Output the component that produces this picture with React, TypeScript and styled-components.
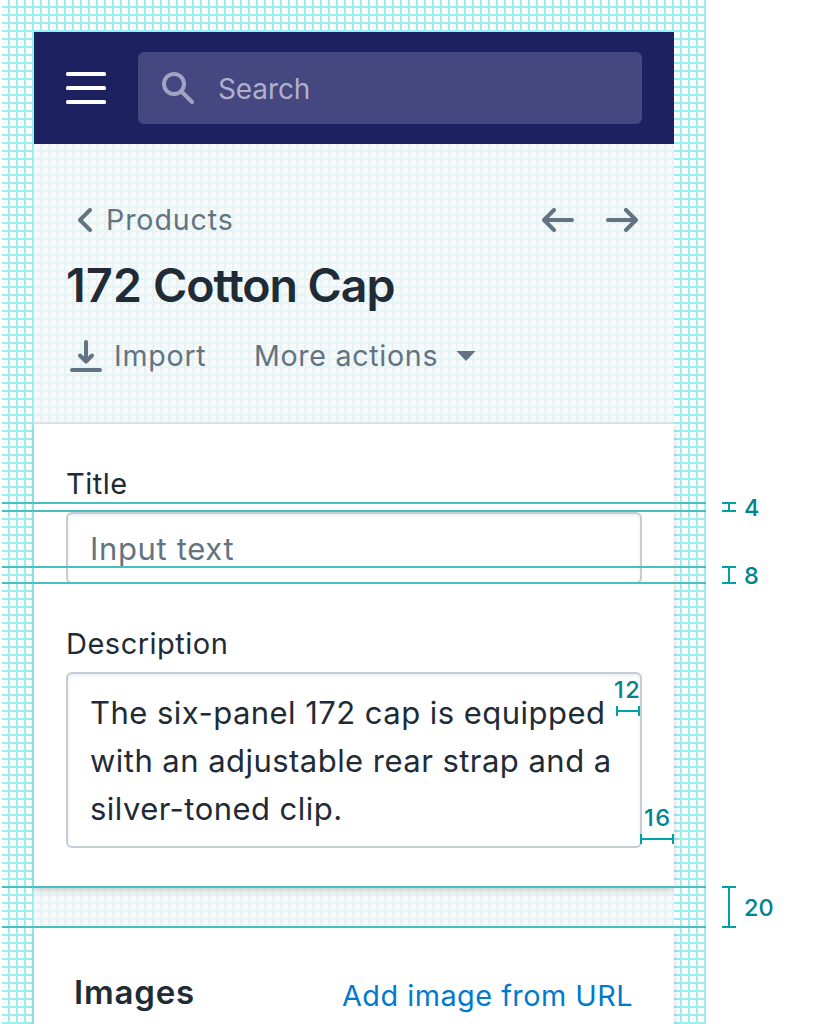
import React from "react";
import styled, { createGlobalStyle } from "styled-components";

const GlobalStyle = createGlobalStyle`
  *, *::before, *::after { box-sizing: border-box; }
  html, body { margin: 0; padding: 0; background: #fff; overflow: hidden; }
  body { font-family: Inter, "Liberation Sans", sans-serif; color: #212b36; }
  svg { display: block; flex: none; }
`;

const Board = styled.main`
  position: relative;
  width: 816px;
  height: 1024px;
  padding-left: 2px;
  overflow: hidden;
  background: #fff;
`;

const GridArea = styled.div`
  width: 704px;
  height: 1024px;
  padding: 32px 32px 0;
  background-image:
    linear-gradient(to right, transparent 6px, #9ceeed 6px),
    linear-gradient(to bottom, transparent 6px, #9ceeed 6px);
  background-size: 8px 8px;
`;

const Screen = styled.div`
  height: 992px;
  display: flex;
  flex-direction: column;
  background: rgba(244, 246, 248, 0.83);
`;

const TopBar = styled.header`
  display: flex;
  align-items: center;
  gap: 32px;
  flex: none;
  height: 112px;
  padding: 0 32px;
  background: #1c2260;
`;

const SearchField = styled.div`
  display: flex;
  align-items: center;
  gap: 24px;
  flex: 1;
  height: 72px;
  padding-left: 24px;
  border-radius: 6px;
  background: #454780;
  color: #b0b0cd;
`;

interface TextProps {
  $size: number;
  $spacing?: number;
  $weight?: number;
  $line?: number;
}

const Text = styled.span<TextProps>`
  display: block;
  white-space: nowrap;
  font-size: ${(p) => p.$size}px;
  font-weight: ${(p) => p.$weight ?? 400};
  letter-spacing: ${(p) => p.$spacing ?? 0}px;
  line-height: ${(p) => p.$line ?? 40}px;
`;

const SearchText = styled(Text)`
  padding-top: 1px;
`;

const PageHeader = styled.section`
  flex: none;
  height: 280px;
  padding: 56px 32px 0;
  border-bottom: 2px solid #d9e3e7;
  color: #637381;
`;

const HeaderRow = styled.div`
  display: flex;
  align-items: center;
  justify-content: space-between;
  height: 40px;
`;

const Breadcrumb = styled.div`
  display: flex;
  align-items: center;
  gap: 14px;
  padding-left: 12px;
`;

const Pager = styled.div`
  display: flex;
  gap: 32px;
  padding-right: 4px;
`;

const PageTitle = styled(Text).attrs({ as: "h1" })`
  margin: 16px 0 22px;
  color: #212b36;
`;

const TitleNumber = styled.span`
  letter-spacing: 0.3px;
`;

const Actions = styled.div`
  display: flex;
  align-items: center;
  height: 40px;
  padding-left: 4px;
`;

const ImportAction = styled.div`
  display: flex;
  align-items: center;
  gap: 12px;
  width: 184px;
`;

const MoreAction = styled.div`
  display: flex;
  align-items: center;
  justify-content: space-between;
  width: 222px;
`;

const Card = styled.section`
  flex: none;
  background: #fff;
  box-shadow: 0 2px 6px rgba(33, 43, 54, 0.22);
  clip-path: inset(0 -6px -8px -6px);
`;

const FormCard = styled(Card)`
  display: flex;
  flex-direction: column;
  gap: 40px;
  height: 464px;
  padding: 40px 32px 0;
`;

const ImagesCard = styled(Card)`
  display: flex;
  justify-content: space-between;
  height: 120px;
  margin-top: 40px;
  padding: 44px 41px 0 40px;
`;

const Field = styled.div`
  display: flex;
  flex-direction: column;
  gap: 8px;
`;

const Control = styled.div<{ $height: number; $top: number }>`
  height: ${(p) => p.$height}px;
  padding: ${(p) => p.$top}px 22px 0;
  border: 2px solid #c4cdd5;
  border-radius: 6px;
  background: #fff;
  box-shadow: inset 0 2px 3px rgba(99, 115, 129, 0.12);
`;

const Placeholder = styled(Text)`
  color: #637381;
`;

const LinkText = styled(Text)`
  color: #007ace;
`;

const Guide = styled.i<{ $y: number }>`
  position: absolute;
  left: 2px;
  top: ${(p) => p.$y}px;
  width: 704px;
  height: 2px;
  background: #47c1bf;
`;

const Span = styled.div<{ $x: number; $y: number; $w: number; $h: number; $axis: "x" | "y" }>`
  position: absolute;
  left: ${(p) => p.$x}px;
  top: ${(p) => p.$y}px;
  width: ${(p) => p.$w}px;
  height: ${(p) => p.$h}px;
  border: 0 solid #00a3a3;
  border-width: ${(p) => (p.$axis === "y" ? "2px 0" : "0 2px")};

  &::after {
    content: "";
    position: absolute;
    background: #00a3a3;
    ${(p) => (p.$axis === "y" ? "left: 6px; width: 2px; top: 0; bottom: 0;" : "top: 4px; height: 2px; left: 0; right: 0;")}
  }
`;

const Measure = styled(Text)<{ $x: number; $y: number }>`
  position: absolute;
  left: ${(p) => p.$x}px;
  top: ${(p) => p.$y}px;
  color: #00848e;
`;

const Stroke = ({ w, h, d }: { w: number; h: number; d: string }) => (
  <svg width={w} height={h} viewBox={`0 0 ${w} ${h}`} fill="none" stroke="currentColor" strokeWidth="4" strokeLinecap="round" strokeLinejoin="round">
    <path d={d} />
  </svg>
);

const MenuIcon = () => (
  <svg width="40" height="32" viewBox="0 0 40 32" fill="#fff">
    <rect width="40" height="4" rx="1.5" />
    <rect y="14" width="40" height="4" rx="1.5" />
    <rect y="28" width="40" height="4" rx="1.5" />
  </svg>
);

const SearchIcon = () => (
  <svg width="32" height="32" viewBox="0 0 32 32" fill="none" stroke="#a2a3c2" strokeWidth="4" strokeLinecap="round">
    <circle cx="12" cy="12" r="10" />
    <path d="M20 20L30 30" />
  </svg>
);

const CaretIcon = () => (
  <svg width="20" height="10" viewBox="0 0 20 10" fill="currentColor">
    <path d="M0.5 0H19.5L10 10Z" />
  </svg>
);

export default function App() {
  return (
    <>
      <GlobalStyle />
      <Board>
        <GridArea>
          <Screen>
            <TopBar>
              <MenuIcon />
              <SearchField>
                <SearchIcon />
                <SearchText $size={28} $spacing={-0.1}>Search</SearchText>
              </SearchField>
            </TopBar>
            <PageHeader>
              <HeaderRow>
                <Breadcrumb>
                  <Stroke w={14} h={24} d="M12 2L2 12L12 22" />
                  <Text $size={28.6} $spacing={0.9}>Products</Text>
                </Breadcrumb>
                <Pager>
                  <Stroke w={32} h={24} d="M30 12H2M12 2L2 12L12 22" />
                  <Stroke w={32} h={24} d="M2 12H30M20 2L30 12L20 22" />
                </Pager>
              </HeaderRow>
              <PageTitle $size={46.5} $weight={600} $line={58} $spacing={-1.05}>
                <TitleNumber>172</TitleNumber> Cotton Cap
              </PageTitle>
              <Actions>
                <ImportAction>
                  <Stroke w={32} h={32} d="M2 30H30M16 2V21.5M10 15.5L16 21.5L22 15.5" />
                  <Text $size={28.6} $spacing={0.75}>Import</Text>
                </ImportAction>
                <MoreAction>
                  <Text $size={28.6} $spacing={0.7}>More actions</Text>
                  <CaretIcon />
                </MoreAction>
              </Actions>
            </PageHeader>
            <FormCard>
              <Field>
                <Text $size={29} $spacing={0.5}>Title</Text>
                <Control $height={72} $top={15}>
                  <Placeholder $size={31} $spacing={0.65}>Input text</Placeholder>
                </Control>
              </Field>
              <Field>
                <Text $size={29} $spacing={0.5}>Description</Text>
                <Control $height={176} $top={15}>
                  <Text $size={31} $spacing={0.46} $line={48}>
                    The six-panel 172 cap is equipped<br />
                    with an adjustable rear strap and a<br />
                    silver-toned clip.
                  </Text>
                </Control>
              </Field>
            </FormCard>
            <ImagesCard>
              <Text $size={33} $weight={600} $spacing={0.8}>Images</Text>
              <LinkText $size={28.8} $spacing={0.5} $line={47}>Add image from URL</LinkText>
            </ImagesCard>
          </Screen>
        </GridArea>

        {[502, 510, 566, 582, 886, 926].map((y) => (
          <Guide key={y} $y={y} />
        ))}

        <Span $axis="y" $x={722} $y={502} $w={14} $h={10} />
        <Measure $size={23.5} $weight={500} $line={28} $x={744} $y={494}>4</Measure>
        <Span $axis="y" $x={722} $y={566} $w={14} $h={18} />
        <Measure $size={23.5} $weight={500} $line={28} $x={744} $y={562}>8</Measure>
        <Span $axis="y" $x={722} $y={886} $w={14} $h={42} />
        <Measure $size={23.5} $weight={500} $line={28} $x={744} $y={894}>20</Measure>
        <Span $axis="x" $x={616} $y={706} $w={24} $h={10} />
        <Measure $size={23.5} $weight={500} $line={28} $spacing={1.4} $x={614} $y={676}>12</Measure>
        <Span $axis="x" $x={640} $y={834} $w={34} $h={10} />
        <Measure $size={23.5} $weight={500} $line={28} $spacing={1.6} $x={644} $y={804}>16</Measure>
      </Board>
    </>
  );
}
